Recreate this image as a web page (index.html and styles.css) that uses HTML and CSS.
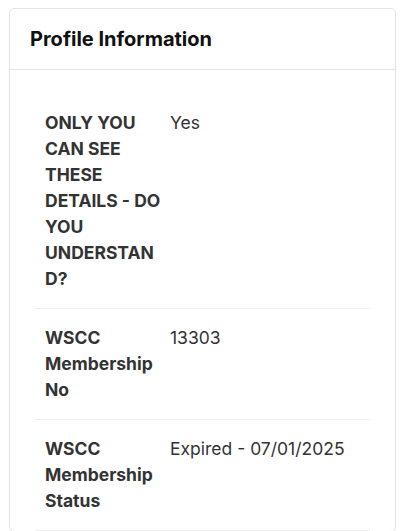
FILE: index.html
```html
<!DOCTYPE html>
<html lang="en">
<head>
<meta charset="UTF-8">
<meta name="viewport" content="width=device-width, initial-scale=1.0">
<title>Profile Information</title>
<link rel="stylesheet" href="styles.css">
</head>
<body>

<!-- Tarjeta de información del perfil -->
<div class="card">
    <div class="card-header">
        <h2>Profile Information</h2>
    </div>
    <div class="card-body">
        <table class="info-table">
            <tr>
                <th>ONLY YOU CAN SEE THESE DETAILS - DO YOU UNDERSTAND?</th>
                <td>Yes</td>
            </tr>
            <tr>
                <th>WSCC Membership No</th>
                <td>13303</td>
            </tr>
            <tr>
                <th>WSCC Membership Status</th>
                <td>Expired - 07/01/2025</td>
            </tr>
        </table>
    </div>
</div>

</body>
</html>
```

FILE: styles.css
```css
/* Estilos generales */
body {
    margin: 8px 6px 0 9px;
    font-family: Inter, "Noto Sans", sans-serif;
    color: #333;
    background: #fff;
}

/* Tarjeta */
.card {
    border: 1px solid #e4e4e7;
    border-radius: 5px;
    background: #fff;
}

.card-header {
    height: 60px;
    padding: 0 20px;
    display: flex;
    align-items: center;
    border-bottom: 1px solid #e4e4e7;
}

.card-header h2 {
    margin: 0;
    font-size: 20px;
    font-weight: 700;
    color: #111;
}

.card-body {
    padding: 24px 25px 0;
}

/* Tabla de datos */
.info-table {
    width: 100%;
    border-collapse: collapse;
    table-layout: fixed;
    font-size: 17.5px;
    line-height: 26px;
}

.info-table th,
.info-table td {
    padding: 16px 10px;
    border-bottom: 1px solid #eeeeee;
    vertical-align: top;
    text-align: left;
}

.info-table th {
    width: 118px;
    padding-right: 0;
    font-weight: 700;
    color: #333;
    word-break: break-word;
}

.info-table td {
    padding-left: 7px;
    color: #333;
}
```
